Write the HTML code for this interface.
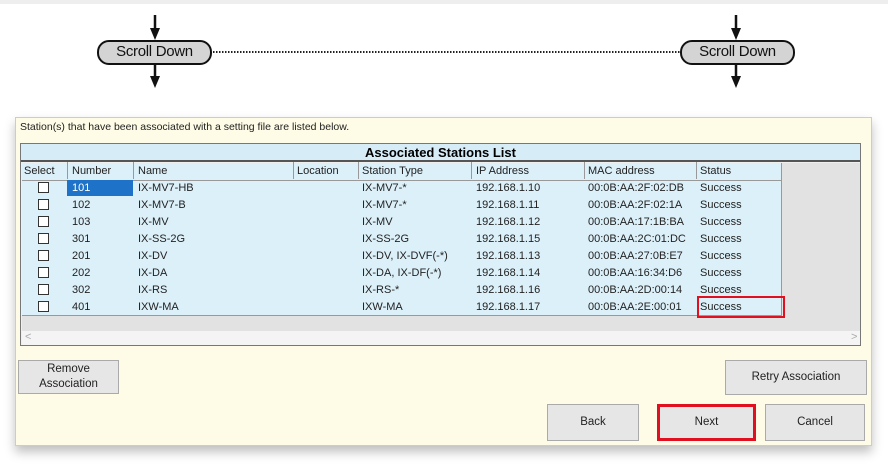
<!DOCTYPE html>
<html><head><meta charset="utf-8"><style>
*{box-sizing:border-box;margin:0;padding:0}
body{width:888px;height:464px;background:#fff;position:relative;overflow:hidden;font-family:"Liberation Sans",sans-serif;}
.abs{position:absolute}
.pill{position:absolute;top:40px;width:115px;height:25px;border:2.5px solid #111;border-radius:12px;background:#d4d4d4;font-size:15px;text-align:center;line-height:20px;color:#111;letter-spacing:-0.3px}
.dlg{position:absolute;left:15px;top:117px;width:857px;height:329px;background:#fefce6;border:1px solid #ccc;box-shadow:0 6px 10px rgba(0,0,0,.25)}
.tbl{position:absolute;left:20px;top:143px;width:841px;height:203px;border:1px solid #777;background:#eef0f0}
.hb{position:absolute;left:0;top:0;width:839px;height:18px;background:#d6ecf7;border-bottom:2px solid #555;font-weight:bold;font-size:13px;text-align:center;line-height:18px}
.grid{position:absolute;left:1px;top:19px;width:760px;height:153px;background:#dcf0f9;}
.c{position:absolute;font-size:11px;color:#222;white-space:nowrap}
.btn{position:absolute;background:#e6e6e6;border:1px solid #aaa;font-size:11.5px;text-align:center;color:#222;display:flex;align-items:center;justify-content:center;line-height:15px}
.cb{position:absolute;width:11px;height:11px;border:1px solid #333;background:#fff}
</style></head><body>
<div class="abs" style="left:0;top:0;width:888px;height:4px;background:#eee"></div>
<svg class="abs" style="left:0;top:0" width="888" height="100">
<g stroke="#111" stroke-width="2.5" fill="#111">
<line x1="155" y1="15" x2="155" y2="32"/><polygon points="150,28 160,28 155,40" stroke="none"/>
<line x1="155" y1="64" x2="155" y2="80"/><polygon points="150,76 160,76 155,88" stroke="none"/>
<line x1="736" y1="15" x2="736" y2="32"/><polygon points="731,28 741,28 736,40" stroke="none"/>
<line x1="736" y1="64" x2="736" y2="80"/><polygon points="731,76 741,76 736,88" stroke="none"/>
</g>
<line x1="213" y1="52" x2="680" y2="52" stroke="#222" stroke-width="2" stroke-dasharray="1.5 1.5"/>
</svg>
<div class="pill" style="left:97px">Scroll Down</div>
<div class="pill" style="left:680px">Scroll Down</div>
<div class="dlg"></div>
<div class="c" style="left:20px;top:121px;font-size:10.5px">Station(s) that have been associated with a setting file are listed below.</div>
<div class="tbl">
<div class="hb">Associated Stations List</div>
<div class="grid"></div>
<div class="abs" style="left:761px;top:19px;width:78px;height:153px;background:#e2e2e2"></div>
<div class="abs" style="left:1px;top:172px;width:838px;height:15px;background:#e2e2e2"></div>
<div class="abs" style="left:1px;top:187px;width:838px;height:14px;background:#f4f4f4"></div>
<div class="c" style="left:4px;top:187px;color:#aaa">&lt;</div>
<div class="c" style="left:830px;top:187px;color:#aaa">&gt;</div>
<div class="abs" style="left:1px;top:36px;width:760px;height:1px;background:#999"></div>
<div class="abs" style="left:1px;top:171px;width:760px;height:1px;background:#999"></div>
<div class="abs" style="left:760px;top:19px;width:1px;height:153px;background:#999"></div>
<div class="abs" style="left:46px;top:36px;width:66px;height:16px;background:#1e73c8"></div>
</div>
<div id="cols"></div>
<div class="abs" style="left:697px;top:296px;width:88px;height:22px;border:2.5px solid #e01020"></div>
<div class="btn" style="left:18px;top:360px;width:101px;height:34px">Remove<br>Association</div>
<div class="btn" style="left:725px;top:360px;width:142px;height:35px">Retry Association</div>
<div class="btn" style="left:547px;top:404px;width:92px;height:37px">Back</div>
<div class="btn" style="left:657px;top:404px;width:99px;height:37px;border:3px solid #e01020">Next</div>
<div class="btn" style="left:765px;top:404px;width:100px;height:37px">Cancel</div>
<script>
var xs=[24,72,138,297,362,476,588,700];
var hd=["Select","Number","Name","Location","Station Type","IP Address","MAC address","Status"];
var seps=[67,133,293,358,471,584,696];
var rows=[["101","IX-MV7-HB","IX-MV7-*","192.168.1.10","00:0B:AA:2F:02:DB"],["102","IX-MV7-B","IX-MV7-*","192.168.1.11","00:0B:AA:2F:02:1A"],["103","IX-MV","IX-MV","192.168.1.12","00:0B:AA:17:1B:BA"],["301","IX-SS-2G","IX-SS-2G","192.168.1.15","00:0B:AA:2C:01:DC"],["201","IX-DV","IX-DV, IX-DVF(-*)","192.168.1.13","00:0B:AA:27:0B:E7"],["202","IX-DA","IX-DA, IX-DF(-*)","192.168.1.14","00:0B:AA:16:34:D6"],["302","IX-RS","IX-RS-*","192.168.1.16","00:0B:AA:2D:00:14"],["401","IXW-MA","IXW-MA","192.168.1.17","00:0B:AA:2E:00:01"]];
var h="";
hd.forEach(function(t,i){h+='<div class="c" style="left:'+xs[i]+'px;top:165px">'+t+'</div>';});
seps.forEach(function(x){h+='<div class="abs" style="left:'+x+'px;top:162px;width:1px;height:17px;background:#999"></div>';});
rows.forEach(function(r,j){var y=182+j*17;
h+='<div class="cb" style="left:38px;top:'+(y)+'px"></div>';
h+='<div class="c" style="left:72px;top:'+y+'px;'+(j==0?'color:#fff':'')+'">'+r[0]+'</div>';
h+='<div class="c" style="left:138px;top:'+y+'px">'+r[1]+'</div>';
h+='<div class="c" style="left:362px;top:'+y+'px">'+r[2]+'</div>';
h+='<div class="c" style="left:476px;top:'+y+'px">'+r[3]+'</div>';
h+='<div class="c" style="left:588px;top:'+y+'px">'+r[4]+'</div>';
h+='<div class="c" style="left:700px;top:'+y+'px">Success</div>';});
document.getElementById("cols").innerHTML=h;
</script>
</body></html>
